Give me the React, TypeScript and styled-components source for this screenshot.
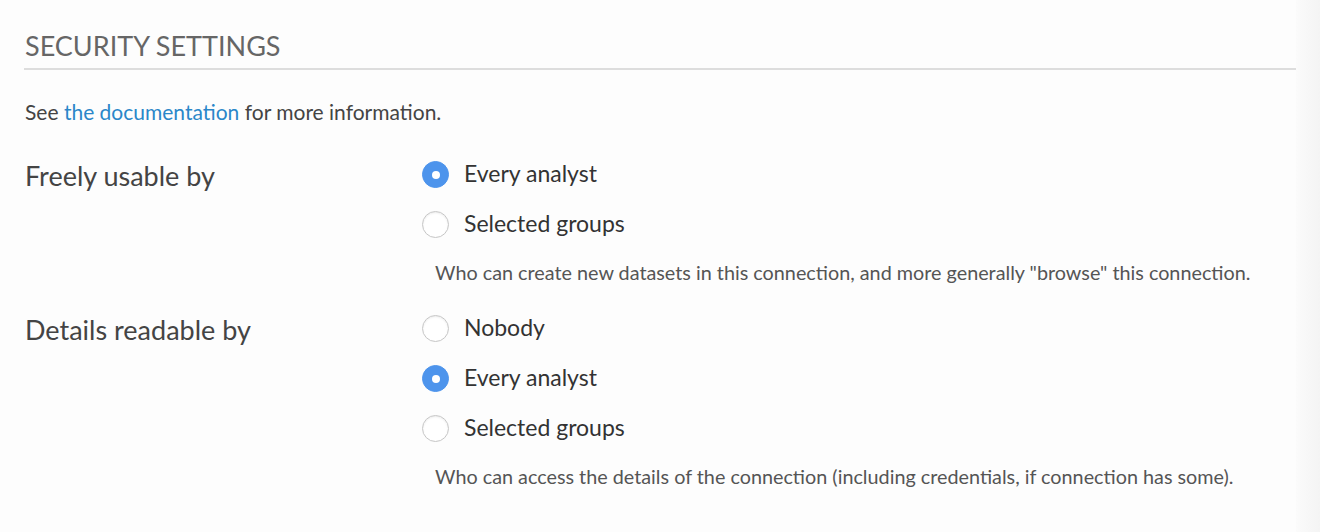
import { createGlobalStyle } from 'styled-components';
import styled from 'styled-components';

const GlobalStyle = createGlobalStyle`
  html, body {
    margin: 0;
    padding: 0;
    background: #fdfdfd;
  }
`;

const Page = styled.div`
  display: flex;
  width: 1320px;
  height: 532px;
  font-family: Lato, 'Noto Sans', sans-serif;
  color: #333;
`;

const Main = styled.div`
  flex: 1;
  padding: 0 0 0 24px;
`;

const Edge = styled.div`
  width: 24px;
  background: linear-gradient(to right, #fbfbfb, #f4f4f4);
`;

const Title = styled.h2`
  margin: 0;
  padding: 30px 0 6px 1px;
  font-size: 27px;
  font-weight: 400;
  line-height: 32px;
  color: #666;
  border-bottom: 2px solid #ddd;
`;

const Intro = styled.p`
  margin: 30px 0 0 1px;
  font-size: 21px;
  line-height: 24px;
  color: #444;
`;

const Link = styled.a`
  color: #2a87c9;
  text-decoration: none;
`;

const Rows = styled.div`
  display: flex;
  flex-direction: column;
  gap: 29px;
  margin-top: 34px;
`;

const Row = styled.div`
  display: grid;
  grid-template-columns: 398px 1fr;
`;

const Label = styled.div`
  padding: 3px 0 0 1px;
  font-size: 27px;
  line-height: 30px;
  color: #444;
`;

const Options = styled.div`
  display: flex;
  flex-direction: column;
  gap: 20px;
`;

const Option = styled.label`
  display: flex;
  align-items: center;
  gap: 15px;
  font-size: 23px;
  line-height: 28px;
  color: #333;
`;

const Radio = styled.span<{ $checked?: boolean }>`
  box-sizing: border-box;
  width: 27px;
  height: 27px;
  border-radius: 50%;
  flex: none;
  display: flex;
  align-items: center;
  justify-content: center;
  margin-top: 3px;
  background: ${(p) => (p.$checked ? '#4d94ec' : '#fff')};
  border: 1px solid ${(p) => (p.$checked ? '#4d94ec' : '#c6c6c6')};
  box-shadow: ${(p) => (p.$checked ? 'none' : 'inset 0 1px 2px rgba(0,0,0,0.08)')};

  &::after {
    content: '';
    display: ${(p) => (p.$checked ? 'block' : 'none')};
    width: 8px;
    height: 8px;
    border-radius: 50%;
    background: #fff;
  }
`;

const Help = styled.div`
  margin: 3px 0 0 13px;
  font-size: 19.8px;
  line-height: 22px;
  color: #555;
`;

type Group = {
  label: string;
  options: string[];
  selected: number;
  help: string;
};

const groups: Group[] = [
  {
    label: 'Freely usable by',
    options: ['Every analyst', 'Selected groups'],
    selected: 0,
    help: 'Who can create new datasets in this connection, and more generally "browse" this connection.',
  },
  {
    label: 'Details readable by',
    options: ['Nobody', 'Every analyst', 'Selected groups'],
    selected: 1,
    help: 'Who can access the details of the connection (including credentials, if connection has some).',
  },
];

export default function App() {
  return (
    <Page>
      <GlobalStyle />
      <Main>
        <Title>SECURITY SETTINGS</Title>
        <Intro>
          See <Link href="#">the documentation</Link> for more information.
        </Intro>
        <Rows>
          {groups.map((group) => (
            <Row key={group.label}>
              <Label>{group.label}</Label>
              <Options>
                {group.options.map((option, i) => (
                  <Option key={option}>
                    <Radio $checked={i === group.selected} />
                    {option}
                  </Option>
                ))}
                <Help>{group.help}</Help>
              </Options>
            </Row>
          ))}
        </Rows>
      </Main>
      <Edge />
    </Page>
  );
}
